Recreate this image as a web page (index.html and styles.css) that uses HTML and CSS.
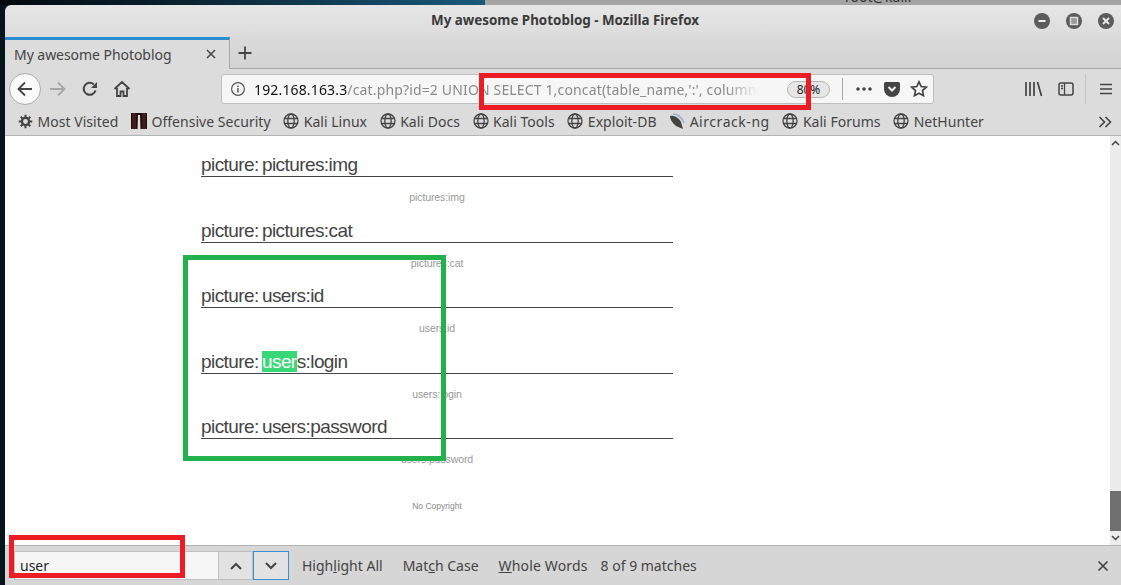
FILE: index.html
```html
<!DOCTYPE html>
<html lang="en">
<head>
    <meta charset="UTF-8">
    <meta name="viewport" content="width=device-width, initial-scale=1.0">
    <title>My awesome Photoblog - Mozilla Firefox</title>
    <link rel="stylesheet" href="styles.css">
</head>
<body>
    <svg class="defs" width="0" height="0">
        <symbol id="globe" viewBox="0 0 16 16">
            <g fill="none" stroke="#444" stroke-width="1.3">
                <circle cx="8" cy="8" r="7"/>
                <ellipse cx="8" cy="8" rx="3.2" ry="7"/>
                <path d="M1.5 5.5h13M1.5 10.5h13"/>
            </g>
        </symbol>
    </svg>

    <div class="desktop-top">
        <div class="desktop-wall"></div>
        <div class="desktop-term"><span>root@kali: ~</span></div>
    </div>

    <div class="window">
        <div class="titlebar">
            <span class="title">My awesome Photoblog - Mozilla Firefox</span>
            <div class="wm-buttons">
                <span class="wm-btn"><svg width="16" height="16" viewBox="0 0 16 16"><path d="M4.5 8h7" stroke="#eee" stroke-width="2"/></svg></span>
                <span class="wm-btn"><svg width="16" height="16" viewBox="0 0 16 16"><rect x="4.5" y="4.5" width="7" height="7" fill="#999" stroke="#ddd" stroke-width="1.4"/></svg></span>
                <span class="wm-btn"><svg width="16" height="16" viewBox="0 0 16 16"><path d="M5 5l6 6M11 5l-6 6" stroke="#eee" stroke-width="1.8"/></svg></span>
            </div>
        </div>

        <div class="tabstrip">
            <div class="tab">
                <span class="tab-label">My awesome Photoblog</span>
                <svg width="12" height="12" viewBox="0 0 12 12"><path d="M2 2l8 8M10 2l-8 8" stroke="#444" stroke-width="1.5"/></svg>
            </div>
            <svg class="newtab" width="16" height="16" viewBox="0 0 16 16"><path d="M8 1.5v13M1.5 8h13" stroke="#444" stroke-width="1.8"/></svg>
        </div>

        <div class="navbar">
            <span class="back-btn">
                <svg width="18" height="18" viewBox="0 0 18 18"><path d="M16 9H2.5M9 2.5L2.5 9 9 15.5" fill="none" stroke="#444" stroke-width="1.8"/></svg>
            </span>
            <svg class="nav-icon nav-forward" width="18" height="18" viewBox="0 0 18 18"><path d="M1 9h14M9 2.5L15.5 9 9 15.5" fill="none" stroke="#a6a6a6" stroke-width="1.8"/></svg>
            <svg class="nav-icon" width="16" height="16" viewBox="0 0 16 16"><path d="M13.5 9.5A6 6 0 1 1 11.8 3.4" fill="none" stroke="#444" stroke-width="2"/><path d="M15 1v6H9z" fill="#444"/></svg>
            <svg class="nav-icon" width="18" height="18" viewBox="0 0 18 18"><path d="M1.5 9L9 2l7.5 7M4 8v8h3.5v-4.5h3V16H14V8" fill="none" stroke="#444" stroke-width="1.8"/></svg>

            <div class="urlbar">
                <svg class="info" width="16" height="16" viewBox="0 0 16 16"><circle cx="8" cy="8" r="6.4" fill="none" stroke="#555" stroke-width="1.2"/><path d="M8 7v4.5M8 4.4v1.5" stroke="#555" stroke-width="1.5"/></svg>
                <div class="url"><span class="host">192.168.163.3</span>/cat.php?id=2 UNION SELECT 1,concat(table_name,':', column_name),3,4 FROM</div>
                <span class="zoom-pill">80%</span>
                <span class="url-sep"></span>
                <svg class="url-icon" width="18" height="6" viewBox="0 0 18 6"><circle cx="3" cy="3" r="1.8"/><circle cx="9" cy="3" r="1.8"/><circle cx="15" cy="3" r="1.8"/></svg>
                <svg class="url-icon" width="16" height="15" viewBox="0 0 16 15"><path d="M1.5 0h13A1.5 1.5 0 0 1 16 1.5V7a8 8 0 0 1-16 0V1.5A1.5 1.5 0 0 1 1.5 0z"/><path d="M4.5 5L8 8.5 11.5 5" fill="none" stroke="#eee" stroke-width="2"/></svg>
                <svg class="url-icon star" width="18" height="18" viewBox="0 0 18 18"><path d="M9 1.8l2.200 4.700 5.100.6-3.800 3.500 1 5.100L9 13.200l-4.500 2.500 1-5.100-3.800-3.500 5.100-.6z" fill="none" stroke="#444" stroke-width="1.7"/></svg>
            </div>

            <svg class="library" width="18" height="16" viewBox="0 0 18 16"><path d="M1 1v14M5 1v14M9 1v14M12.5 1l4 14" fill="none" stroke="#444" stroke-width="1.7"/></svg>
            <svg class="sidebar" width="16" height="14" viewBox="0 0 16 14"><rect x="1" y="1" width="14" height="12" rx="2" fill="none" stroke="#444" stroke-width="1.5"/><path d="M6.5 1v12M3 4h2M3 6.5h2" stroke="#444" stroke-width="1.3"/></svg>
            <span class="nav-sep"></span>
            <svg class="hamburger" width="14" height="12" viewBox="0 0 14 12"><path d="M1 1.5h12M1 6h12M1 10.500h12" stroke="#444" stroke-width="1.7"/></svg>
        </div>

        <div class="bookmarks">
            <span class="bookmark">
                <svg width="15" height="15" viewBox="0 0 16 16"><circle cx="8" cy="8" r="3.800" fill="none" stroke="#444" stroke-width="2.400"/><path d="M8 .8v3M8 12.200v3M.8 8h3M12.200 8h3M2.900 2.900L5 5M11 11l2.100 2.100M13.100 2.900L11 5M5 11l-2.100 2.100" stroke="#444" stroke-width="2.200"/></svg>
                Most Visited
            </span>
            <span class="bookmark">
                <svg width="16" height="16" viewBox="0 0 16 16"><rect width="16" height="16" fill="#1c0c0c"/><path d="M2 0v16M4 0v16M12 0v16M14 0v16" stroke="#6d2a2a" stroke-width="1"/><path d="M7 2h2l.5 14h-3z" fill="#ddd"/></svg>
                Offensive Security
            </span>
            <span class="bookmark"><svg width="16" height="16"><use href="#globe"/></svg>Kali Linux</span>
            <span class="bookmark"><svg width="16" height="16"><use href="#globe"/></svg>Kali Docs</span>
            <span class="bookmark"><svg width="16" height="16"><use href="#globe"/></svg>Kali Tools</span>
            <span class="bookmark"><svg width="16" height="16"><use href="#globe"/></svg>Exploit-DB</span>
            <span class="bookmark bookmark-wide">
                <svg width="16" height="16" viewBox="0 0 16 16"><path d="M1 3C5 2 10 5 12 9l2 7-7-3C3 10 1 6 1 3z" fill="#444"/><path d="M4 1c5 0 9 4 11 9" fill="none" stroke="#8fb2cf" stroke-width="1.5"/></svg>
                Aircrack-ng
            </span>
            <span class="bookmark"><svg width="16" height="16"><use href="#globe"/></svg>Kali Forums</span>
            <span class="bookmark"><svg width="16" height="16"><use href="#globe"/></svg>NetHunter</span>
            <svg class="more" width="14" height="12" viewBox="0 0 14 12"><path d="M1.5 1l5 5-5 5M7.5 1l5 5-5 5" fill="none" stroke="#444" stroke-width="1.6"/></svg>
        </div>

        <div class="viewport">
            <div class="page">
                <div class="entry">
                    <h2>picture: pictures:img</h2>
                    <p>pictures:img</p>
                </div>
                <div class="entry">
                    <h2>picture: pictures:cat</h2>
                    <p>pictures:cat</p>
                </div>
                <div class="entry">
                    <h2>picture: users:id</h2>
                    <p>users:id</p>
                </div>
                <div class="entry">
                    <h2>picture: <mark>user</mark>s:login</h2>
                    <p>users:login</p>
                </div>
                <div class="entry">
                    <h2>picture: users:password</h2>
                    <p>users:password</p>
                </div>
                <div class="footer">No Copyright</div>
            </div>
            <div class="scrollbar">
                <svg width="11" height="8" viewBox="0 0 11 8"><path d="M2 6l3.500-3.500L9 6" fill="none" stroke="#444" stroke-width="1.5"/></svg>
                <div class="track"><div class="thumb"></div></div>
                <svg width="11" height="8" viewBox="0 0 11 8"><path d="M2 2l3.500 3.500L9 2" fill="none" stroke="#444" stroke-width="1.5"/></svg>
            </div>
        </div>

        <div class="findbar">
            <div class="find-input">user</div>
            <span class="find-btn">
                <svg width="14" height="10" viewBox="0 0 14 10"><path d="M2 8l5-5 5 5" fill="none" stroke="#444" stroke-width="2"/></svg>
            </span>
            <span class="find-btn find-btn-active">
                <svg width="14" height="10" viewBox="0 0 14 10"><path d="M2 2l5 5 5-5" fill="none" stroke="#444" stroke-width="2"/></svg>
            </span>
            <span class="find-opt opt-highlight">High<u>l</u>ight All</span>
            <span class="find-opt opt-case">Mat<u>c</u>h Case</span>
            <span class="find-opt opt-words"><u>W</u>hole Words</span>
            <span class="find-opt find-count">8 of 9 matches</span>
            <svg class="find-close" width="12" height="12" viewBox="0 0 12 12"><path d="M1.5 1.5l9 9M10.5 1.5l-9 9" stroke="#444" stroke-width="1.7"/></svg>
        </div>
    </div>

    <!-- annotations drawn on top of the screenshot -->
    <div class="mark-box mark-url"></div>
    <div class="mark-box mark-find"></div>
    <div class="mark-box mark-users"></div>
</body>
</html>
```

FILE: styles.css
```css
html, body {
    margin: 0;
    padding: 0;
    height: 585px;
    overflow: hidden;
}
body {
    background-color: #06141c;
    font-family: "Noto Sans", sans-serif;
    color: #444;
    position: relative;
}
.defs {
    position: absolute;
}

/* desktop behind the window */
.desktop-top {
    display: flex;
    height: 5px;
    overflow: hidden;
}
.desktop-wall {
    width: 485px;
    background: linear-gradient(to right, #03090d, #0b2433 40%, #1a5a7c);
}
.desktop-term {
    flex: 1;
    background: #a4a4a4;
    position: relative;
}
.desktop-term span {
    position: absolute;
    left: 360px;
    top: -13px;
    font-size: 14px;
    color: #333;
}

.window {
    margin-left: 5px;
    height: 580px;
    display: flex;
    flex-direction: column;
    border-top-left-radius: 6px;
    overflow: hidden;
}

/* title bar */
.titlebar {
    height: 32px;
    flex: none;
    position: relative;
    display: flex;
    align-items: center;
    justify-content: center;
    box-sizing: border-box;
    padding-bottom: 2px;
    background: linear-gradient(#e6e6e6, #dcdcdc);
}
.title {
    font-size: 13.4px;
    font-weight: bold;
    color: #3a3a3a;
    margin-left: 4px;
}
.wm-buttons {
    position: absolute;
    right: 7px;
    top: 8px;
    display: flex;
    gap: 16px;
}
.wm-btn {
    width: 16px;
    height: 16px;
    border-radius: 50%;
    background: #5c5c5c;
    display: block;
}
.wm-btn svg {
    display: block;
}

/* tabs */
.tabstrip {
    height: 32px;
    flex: none;
    display: flex;
    align-items: center;
    background: linear-gradient(#dadada, #d4d4d4);
    border-bottom: 1px solid #a8a8a8;
    box-sizing: border-box;
}
.tab {
    width: 225px;
    height: 32px;
    box-sizing: border-box;
    border-top: 3px solid #2a8fd0;
    border-right: 1px solid #a8a8a8;
    background: #dcdcdc;
    display: flex;
    align-items: center;
    justify-content: space-between;
    padding: 0 12px 0 9px;
    font-size: 14px;
    letter-spacing: -0.05px;
}
.newtab {
    margin-left: 7px;
}

/* navigation row */
.navbar {
    height: 40px;
    flex: none;
    display: flex;
    align-items: center;
    background: #dcdcdc;
    padding-left: 4px;
    box-sizing: border-box;
}
.back-btn {
    width: 32px;
    height: 32px;
    box-sizing: border-box;
    border: 1px solid #aaa;
    border-radius: 50%;
    background: #fafafa;
    display: flex;
    align-items: center;
    justify-content: center;
    flex: none;
}
.nav-icon {
    margin-left: 15px;
    flex: none;
}
.nav-forward {
    margin-left: 8px;
}
.urlbar {
    width: 713px;
    height: 30px;
    margin-left: 90px;
    box-sizing: border-box;
    background: #f6f6f6;
    border: 1px solid #bdbdbd;
    border-radius: 3px;
    display: flex;
    align-items: center;
    flex: none;
    padding-left: 8px;
    font-size: 14px;
}
.info {
    flex: none;
}
.url {
    width: 530px;
    margin-left: 8px;
    overflow: hidden;
    white-space: nowrap;
    color: #8a8a8a;
    letter-spacing: 0.15px;
    flex: none;
    -webkit-mask-image: linear-gradient(to right, #000 89%, transparent 95%);
    mask-image: linear-gradient(to right, #000 89%, transparent 95%);
}
.host {
    color: #111;
}
.zoom-pill {
    width: 43px;
    height: 17px;
    margin-left: 3px;
    box-sizing: border-box;
    border: 1px solid #b5b5b5;
    border-radius: 9px;
    background: #e6e6e6;
    font-size: 12px;
    line-height: 15px;
    text-align: center;
    color: #222;
    flex: none;
}
.url-sep {
    width: 1px;
    height: 22px;
    background: #a8a8a8;
    margin: 0 12px;
    flex: none;
}
.url-icon {
    fill: #444;
    margin-right: 11px;
    flex: none;
}
.star {
    margin-right: 0;
    margin-left: -1px;
}
.library {
    margin-left: 91px;
    flex: none;
}
.sidebar {
    margin-left: 15px;
    flex: none;
}
.nav-sep {
    width: 1px;
    height: 30px;
    background: #c4c4c4;
    margin-left: 11px;
    flex: none;
}
.hamburger {
    margin-left: 13px;
    flex: none;
}

/* bookmarks toolbar */
.bookmarks {
    height: 27px;
    flex: none;
    display: flex;
    align-items: center;
    background: #dcdcdc;
    border-bottom: 1px solid #b4b4b4;
    box-sizing: border-box;
    padding: 0 0 2px 13px;
    gap: 12.6px;
    font-size: 14px;
    letter-spacing: 0.03px;
    position: relative;
    white-space: nowrap;
}
.bookmark {
    display: flex;
    align-items: center;
    gap: 4.5px;
}
.bookmark-wide {
    letter-spacing: 0.55px;
}
.more {
    position: absolute;
    right: 9px;
    top: 7px;
}

/* page content */
.viewport {
    flex: 1;
    min-height: 0;
    display: flex;
    background: #fff;
}
.page {
    flex: 1;
    min-width: 0;
    overflow: hidden;
    padding: 9px 0 0 196px;
    font-family: "Liberation Sans", Arial, sans-serif;
}
.entry {
    width: 472px;
    height: 65.5px;
}
.entry h2 {
    margin: 0;
    height: 32px;
    box-sizing: border-box;
    border-bottom: 1px solid #444;
    font-size: 19px;
    font-weight: normal;
    line-height: 24px;
    padding-top: 8px;
    letter-spacing: -0.58px;
    word-spacing: -1.4px;
    color: #444;
}
.entry h2 mark {
    background: #38d878;
    color: #fff;
}
.entry p {
    margin: 13px 0 0;
    font-size: 10.6px;
    line-height: 14px;
    text-align: center;
    letter-spacing: -0.15px;
    color: #999;
}
.footer {
    width: 472px;
    margin-top: 13px;
    padding-top: 14px;
    font-size: 8.5px;
    line-height: 12px;
    text-align: center;
    color: #888;
}
.scrollbar {
    width: 11px;
    flex: none;
    background: #ececec;
    display: flex;
    flex-direction: column;
    align-items: center;
}
.scrollbar svg {
    flex: none;
    margin: 3px 0;
    display: block;
}
.track {
    flex: 1;
    width: 100%;
    position: relative;
}
.thumb {
    position: absolute;
    left: 0;
    right: 0;
    bottom: 0;
    height: 40px;
    background: #6f6f6f;
}

/* find bar */
.findbar {
    height: 40px;
    flex: none;
    box-sizing: border-box;
    border-top: 1px solid #b4b4b4;
    background: #d6d6d6;
    display: flex;
    align-items: center;
    padding-left: 9px;
    font-size: 14px;
    position: relative;
    white-space: nowrap;
}
.find-input {
    width: 205px;
    height: 29px;
    box-sizing: border-box;
    background: #f6f6f6;
    border: 1px solid #c0c0c0;
    padding-left: 5px;
    line-height: 28px;
    color: #222;
    flex: none;
}
.find-btn {
    width: 34px;
    height: 29px;
    box-sizing: border-box;
    border: 1px solid #bdbdbd;
    border-left: none;
    background: #e2e2e2;
    display: flex;
    align-items: center;
    justify-content: center;
    flex: none;
}
.find-btn-active {
    border: 1px solid #3b8ed0;
    width: 36px;
}
.find-opt {
    flex: none;
}
.opt-highlight {
    margin-left: 13px;
}
.opt-case {
    margin-left: 20px;
}
.opt-words {
    margin-left: 20px;
    letter-spacing: 0.15px;
}
.find-count {
    margin-left: 13px;
}
.find-close {
    position: absolute;
    right: 12px;
    top: 14px;
}

/* coloured rectangles over the screenshot */
.mark-box {
    position: absolute;
    box-sizing: border-box;
    border-style: solid;
    border-width: 5px;
}
.mark-url {
    left: 479px;
    top: 73px;
    width: 332px;
    height: 37px;
    border-color: #ed1c24;
}
.mark-find {
    left: 9px;
    top: 535px;
    width: 176px;
    height: 43px;
    border-color: #ed1c24;
}
.mark-users {
    left: 183px;
    top: 255px;
    width: 263px;
    height: 206px;
    border-color: #22b14c;
}
```
